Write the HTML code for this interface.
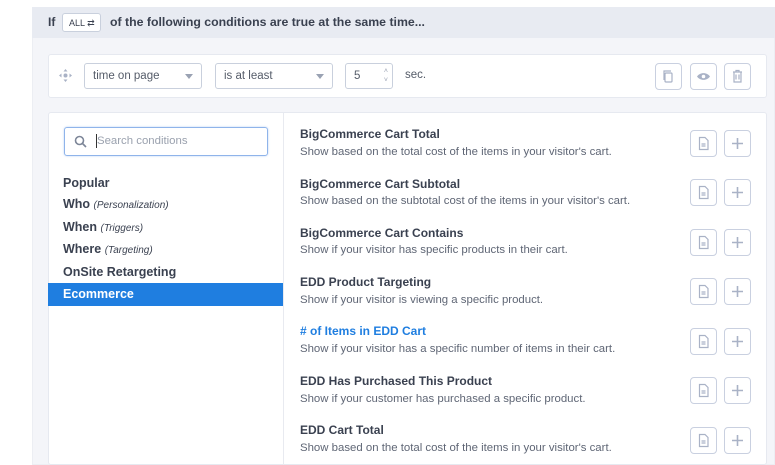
<!DOCTYPE html><html><head><style>
*{box-sizing:border-box;margin:0;padding:0}
body{width:775px;height:465px;overflow:hidden;background:#fff;font-family:"Liberation Sans",sans-serif;position:relative;color:#3a4150}
.abs{position:absolute}
.wrap{left:32px;top:7px;width:743px;height:458px;background:#f4f5f9;border:1px solid #eceef3}
.head{left:32px;top:7px;width:743px;height:31px;background:#e8ebf2}
.btn{position:absolute;width:27px;height:27px;border:1px solid #c9d0e0;border-radius:4px;background:#fff}
.sel{position:absolute;top:63px;height:26px;border:1px solid #c9d0dd;border-radius:3px;background:#fff;font-size:11.5px;color:#555c69;padding:6px 8px}
.tri{position:absolute;right:8px;top:10px;width:0;height:0;border-left:4px solid transparent;border-right:4px solid transparent;border-top:5px solid #9aa2b3}
.t{position:absolute;left:300px;font-size:12px;font-weight:bold;color:#3a4150}
.d{position:absolute;left:300px;font-size:11.4px;color:#5f6675}
.cat{position:absolute;left:63px;font-size:12.5px;font-weight:bold;color:#3a4150}
.cat i{font-size:10px;font-weight:normal}
</style></head><body>
<div class="abs wrap"></div>
<div class="abs head"></div>
<div class="abs" style="left:48px;top:15px;font-size:12px;font-weight:bold;color:#3a4150">If</div>
<div class="abs" style="left:62px;top:13px;width:39px;height:19px;border:1px solid #c9d0dd;border-radius:3px;background:#fff;font-size:9px;padding:4px 0 0 6px;color:#3a4150">ALL ⇄</div>
<div class="abs" style="left:110px;top:15px;font-size:12.3px;font-weight:bold;color:#3a4150">of the following conditions are true at the same time...</div>
<div class="abs" style="left:48px;top:54px;width:719px;height:44px;background:#fff;border:1px solid #e6e9f0;border-radius:3px"></div>
<svg class="abs" style="left:59px;top:69px" width="13" height="13" viewBox="0 0 13 13" fill="#a9b2c6"><circle cx="6.5" cy="6.5" r="2"/><path d="M6.5 0l2 2.5h-4zM6.5 13l2-2.5h-4zM0 6.5l2.5-2v4zM13 6.5l-2.5-2v4z"/></svg>
<div class="sel" style="left:84px;width:118px">time on page<span class="tri"></span></div>
<div class="sel" style="left:215px;width:118px">is at least<span class="tri"></span></div>
<div class="sel" style="left:345px;width:48px">5<span class="abs" style="right:4px;top:3px;font-size:7px;line-height:9px;color:#9aa2b3">˄<br>˅</span></div>
<div class="abs" style="left:405px;top:69px;font-size:11.5px;color:#555c69">sec.</div>
<div class="btn" style="left:655px;top:63px"><svg width="25" height="25" viewBox="0 0 25 25" fill="none" stroke="#a9b2c6" stroke-width="1.2"><rect x="9" y="9" width="7" height="9" rx="1"/><path d="M8 16V7h7"/></svg></div>
<div class="btn" style="left:690px;top:63px"><svg width="25" height="25" viewBox="0 0 25 25"><path d="M6 12.5c3-4.5 10-4.5 13 0c-3 4.5-10 4.5-13 0z" fill="#a9b2c6"/><circle cx="12.5" cy="12.5" r="1.8" fill="#fff"/></svg></div>
<div class="btn" style="left:724px;top:63px"><svg width="25" height="25" viewBox="0 0 25 25" fill="none" stroke="#a9b2c6" stroke-width="1.2"><path d="M8 8h9M11 8V6.5h3V8M9 8v10h7V8M11 10.5v5M14 10.5v5"/></svg></div>
<div class="abs" style="left:48px;top:112px;width:719px;height:353px;background:#fff;border:1px solid #e6e9f0;border-radius:3px"></div>
<div class="abs" style="left:283px;top:113px;width:1px;height:352px;background:#e8eaf0"></div>
<div class="abs" style="left:64px;top:127px;width:204px;height:29px;border:1px solid #8fb4ea;border-radius:3px;box-shadow:0 0 2px #bcd3f5"></div>
<svg class="abs" style="left:74px;top:135px" width="13" height="13" viewBox="0 0 13 13" fill="none" stroke="#7d8698" stroke-width="1.6"><circle cx="5.5" cy="5.5" r="4"/><path d="M8.5 8.5l3.5 3.5"/></svg>
<div class="abs" style="left:96px;top:134px;width:1px;height:14px;background:#333"></div>
<div class="abs" style="left:97px;top:135px;font-size:11.4px;color:#9aa1ae">Search conditions</div>
<div class="cat" style="top:176px">Popular</div>
<div class="cat" style="top:197px">Who <i>(Personalization)</i></div>
<div class="cat" style="top:220px">When <i>(Triggers)</i></div>
<div class="cat" style="top:242px">Where <i>(Targeting)</i></div>
<div class="cat" style="top:265px">OnSite Retargeting</div>
<div class="abs" style="left:48px;top:283px;width:235px;height:23px;background:#1f7ee0"></div>
<div class="cat" style="top:287px;color:#fff">Ecommerce</div>
<div class="t" style="top:127px">BigCommerce Cart Total</div>
<div class="d" style="top:146px">Show based on the total cost of the items in your visitor's cart.</div>
<div class="t" style="top:177px">BigCommerce Cart Subtotal</div>
<div class="d" style="top:195px">Show based on the subtotal cost of the items in your visitor's cart.</div>
<div class="t" style="top:226px">BigCommerce Cart Contains</div>
<div class="d" style="top:244px">Show if your visitor has specific products in their cart.</div>
<div class="t" style="top:275px">EDD Product Targeting</div>
<div class="d" style="top:294px">Show if your visitor is viewing a specific product.</div>
<div class="t" style="top:324px;color:#1f7ee0">#&nbsp;of Items in EDD Cart</div>
<div class="d" style="top:343px">Show if your visitor has a specific number of items in their cart.</div>
<div class="t" style="top:374px">EDD Has Purchased This Product</div>
<div class="d" style="top:393px">Show if your customer has purchased a specific product.</div>
<div class="t" style="top:423px">EDD Cart Total</div>
<div class="d" style="top:442px">Show based on the total cost of the items in your visitor's cart.</div>
<div id="btns"></div>
<script>
var ys=[130,179,229,278,328,377,427],h='';
ys.forEach(function(y){
h+='<div class="btn" style="left:690px;top:'+y+'px"><svg width="25" height="25" viewBox="0 0 25 25" fill="none" stroke="#a9b2c6" stroke-width="1.2"><path d="M8.5 6.5h5.5l3 3v9h-8.5z"/><path d="M10.5 13h4M10.5 15h4"/></svg></div>';
h+='<div class="btn" style="left:724px;top:'+y+'px"><svg width="25" height="25" viewBox="0 0 25 25" stroke="#a9b2c6" stroke-width="1.6"><path d="M12.5 7v11M7 12.5h11"/></svg></div>';
});
document.getElementById('btns').innerHTML=h;
</script>
</body></html>
